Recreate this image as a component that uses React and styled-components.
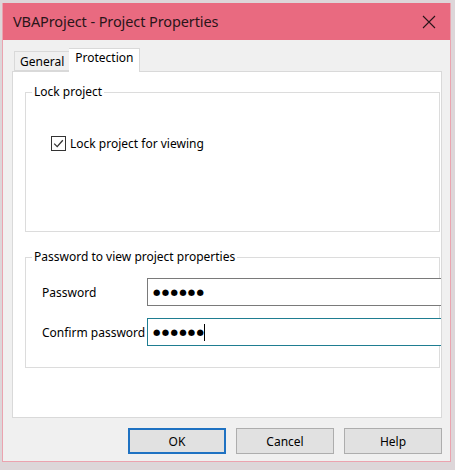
import React from 'react';
import styled, { createGlobalStyle } from 'styled-components';

const GlobalStyle = createGlobalStyle`
  html, body {
    margin: 0;
    padding: 0;
    background: #ddd6d9;
    font-family: "Noto Sans", "Open Sans", sans-serif;
  }
`;

// Dialog frame
const Window = styled.div`
  margin: 3px 0 0 2px;
  width: 449px;
  height: 459px;
  background: #f0f0f0;
  border: 1px solid #eba3af;
  border-top: none;
  display: flex;
  flex-direction: column;
  box-sizing: border-box;
  overflow: hidden;
`;

const TitleBar = styled.div`
  height: 37px;
  flex: none;
  background: #e96a80;
  display: flex;
  align-items: center;
  justify-content: space-between;
  padding: 0 10px 0 10px;
  box-sizing: border-box;
`;

const Title = styled.div`
  font-size: 14.5px;
  color: #2a1519;
  letter-spacing: -0.1px;
  padding-bottom: 1px;
`;

const CloseButton = styled.div`
  width: 16px;
  height: 16px;
  display: flex;
  align-items: center;
  justify-content: center;
  margin-right: 3px;
`;

const Body = styled.div`
  flex: 1;
  display: flex;
  flex-direction: column;
  padding: 8px 8px 0 9px;
`;

const TabStrip = styled.div`
  display: flex;
  align-items: flex-end;
  height: 23px;
  padding-left: 2px;
  position: relative;
  z-index: 1;
`;

const Tab = styled.div`
  font-size: 12px;
  color: #000;
  box-sizing: border-box;
  border: 1px solid #d9d9d9;
  border-bottom: ${(p) => (p.$active ? 'none' : '1px solid #d9d9d9')};
  background: ${(p) => (p.$active ? '#fff' : '#f0f0f0')};
  height: ${(p) => (p.$active ? '24px' : '20px')};
  margin-bottom: ${(p) => (p.$active ? '-1px' : '0')};
  padding: ${(p) => (p.$active ? '1px 6px 0 6px' : '2px 5px 0 5px')};
  ${(p) => (p.$active ? 'border-left: none;' : 'border-right: none;')}
  line-height: 16px;
`;

const Panel = styled.div`
  width: 430px;
  height: 347px;
  box-sizing: border-box;
  background: #fff;
  border: 1px solid #d9d9d9;
  padding: 12px 1px 0 12px;
  display: flex;
  flex-direction: column;
  gap: 17px;
  overflow: hidden;
`;

const Group = styled.fieldset`
  margin: 0;
  box-sizing: border-box;
  width: 415px;
  height: ${(p) => p.$h}px;
  border: 1px solid #dcdcdc;
  padding: 0 0 0 6px;
  min-width: 0;
`;

const GroupContent = styled.div`
  padding: ${(p) => p.$pad};
`;

const Legend = styled.legend`
  font-size: 12px;
  color: #000;
  padding: 0 2px;
  line-height: 16px;
`;

const CheckRow = styled.label`
  display: flex;
  align-items: center;
  gap: 4px;
  font-size: 12px;
  color: #000;
`;

const CheckBox = styled.span`
  width: 15px;
  height: 15px;
  box-sizing: border-box;
  border: 1px solid #333;
  background: #fff;
  display: flex;
  align-items: center;
  justify-content: center;
`;

const FieldRow = styled.div`
  display: flex;
  align-items: center;
  height: 28px;
  margin-top: ${(p) => p.$gap || 0}px;
`;

const FieldLabel = styled.div`
  width: 105px;
  font-size: 12px;
  color: #000;
  flex: none;
`;

const PasswordBox = styled.div`
  width: 300px;
  height: 28px;
  flex: none;
  box-sizing: border-box;
  background: #fff;
  border: 1px solid ${(p) => (p.$focused ? '#1f7d91' : '#7a7a7a')};
  display: flex;
  align-items: center;
  padding-left: 5px;
`;

const Dots = styled.span`
  font-family: "DejaVu Sans", sans-serif;
  font-size: 8.5px;
  letter-spacing: 1.3px;
  color: #000;
`;

const Caret = styled.span`
  width: 1px;
  height: 17px;
  background: #000;
  margin-left: -1px;
`;

const Footer = styled.div`
  display: flex;
  justify-content: flex-end;
  gap: 10px;
  padding: 10px 0 0 0;
`;

const Button = styled.button`
  width: 98px;
  height: 26px;
  box-sizing: border-box;
  background: #e1e1e1;
  border: ${(p) => (p.$default ? '2px solid #1f72c2' : '1px solid #adadad')};
  font-family: "Noto Sans", "Open Sans", sans-serif;
  font-size: 12px;
  color: #000;
  padding: 0;
`;

function CloseIcon() {
  return (
    <svg width="14" height="14" viewBox="0 0 14 14">
      <path d="M1 1 L13 13 M13 1 L1 13" stroke="#2a1519" strokeWidth="1.1" fill="none" />
    </svg>
  );
}

function CheckMark() {
  return (
    <svg width="11" height="11" viewBox="0 0 11 11">
      <path d="M1.2 5.6 L4.2 8.6 L9.8 2.2" stroke="#333" strokeWidth="1.3" fill="none" />
    </svg>
  );
}

export default function App() {
  return (
    <>
      <GlobalStyle />
      <Window>
        <TitleBar>
          <Title>VBAProject - Project Properties</Title>
          <CloseButton>
            <CloseIcon />
          </CloseButton>
        </TitleBar>
        <Body>
          <TabStrip>
            <Tab>General</Tab>
            <Tab $active>Protection</Tab>
          </TabStrip>
          <Panel>
            <Group $h={148}>
              <Legend>Lock project</Legend>
              <GroupContent $pad="35px 0 0 19px">
                <CheckRow>
                  <CheckBox>
                    <CheckMark />
                  </CheckBox>
                  Lock project for viewing
                </CheckRow>
              </GroupContent>
            </Group>
            <Group $h={119}>
              <Legend>Password to view project properties</Legend>
              <GroupContent $pad="13px 0 0 10px">
                <FieldRow>
                  <FieldLabel>Password</FieldLabel>
                  <PasswordBox>
                    <Dots>●●●●●●</Dots>
                  </PasswordBox>
                </FieldRow>
                <FieldRow $gap={12}>
                  <FieldLabel>Confirm password</FieldLabel>
                  <PasswordBox $focused>
                    <Dots>●●●●●●</Dots>
                    <Caret />
                  </PasswordBox>
                </FieldRow>
              </GroupContent>
            </Group>
          </Panel>
          <Footer>
            <Button $default>OK</Button>
            <Button>Cancel</Button>
            <Button>Help</Button>
          </Footer>
        </Body>
      </Window>
    </>
  );
}
